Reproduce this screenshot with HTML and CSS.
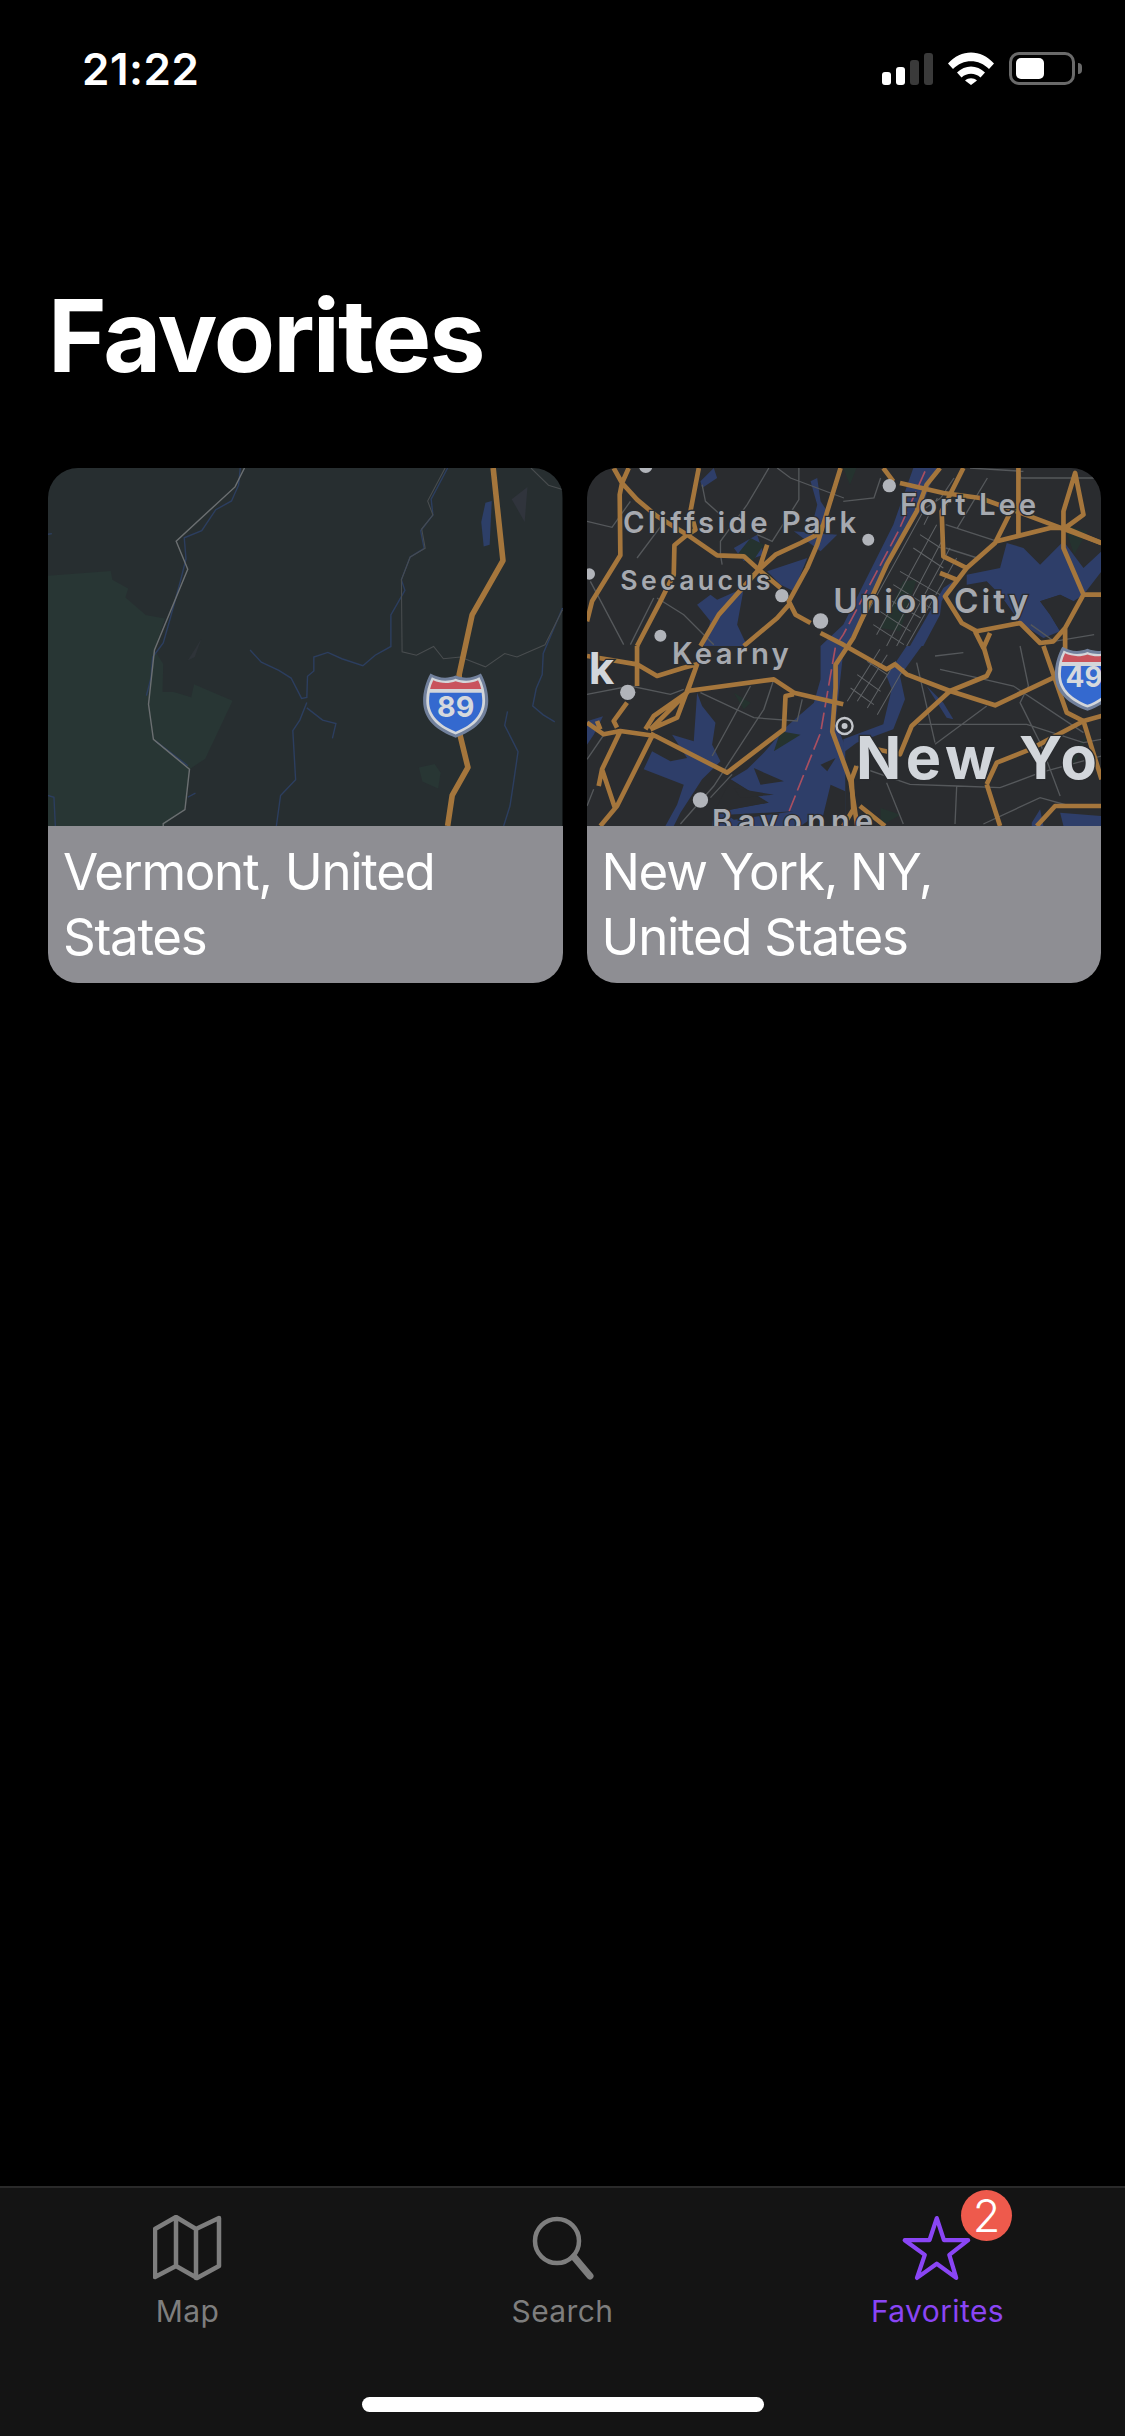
FILE: index.html
```html
<!DOCTYPE html>
<html lang="en">
<head>
  <meta charset="UTF-8">
  <meta name="viewport" content="width=device-width, initial-scale=1.0">
  <title>Favorites</title>
  <link rel="stylesheet" href="styles.css">
</head>
<body>
  <div class="status-bar">
    <span class="time">21:22</span>
    <div class="status-icons">
      <div class="signal">
        <span class="bar bar-1"></span>
        <span class="bar bar-2"></span>
        <span class="bar bar-3 off"></span>
        <span class="bar bar-4 off"></span>
      </div>
      <svg class="wifi" width="46" height="33" viewBox="0 0 46 33">
        <path d="M0 11.5C13 -3.2 33 -3.2 46 11.5L41 17C31 6.5 15 6.5 5 17Z" fill="#fff"/>
        <path d="M9 20.5C17 12.5 29 12.5 37 20.5L32.5 25.5C27 20.5 19 20.5 13.5 25.5Z" fill="#fff"/>
        <path d="M17 28.5C20.5 25.5 25.5 25.5 29 28.5L23 33Z" fill="#fff"/>
      </svg>
      <div class="battery"><span class="battery-level"></span></div>
      <span class="battery-nub"></span>
    </div>
  </div>

  <h1 class="title">Favorites</h1>

  <div class="cards">
    <div class="card">
      <svg class="map map-vermont" viewBox="51 51 1469 1021" preserveAspectRatio="none">
        <defs>
          <g id="shield">
            <path d="M1215 643C1240 653 1265 650 1287 637C1301 662 1308 690 1308 715C1308 770 1266 802 1215 820C1164 802 1122 770 1122 715C1122 690 1129 662 1143 637C1165 650 1190 653 1215 643Z" fill="#71809c"/>
            <path d="M1215 652C1238 661 1262 659 1283 648C1294 670 1299 692 1299 715C1299 765 1260 794 1215 811C1170 794 1131 765 1131 715C1131 692 1136 670 1147 648C1168 659 1192 661 1215 652Z" fill="#d3d6da"/>
            <path d="M1215 692H1289C1290 700 1291 708 1291 715C1291 760 1256 787 1215 803C1174 787 1139 760 1139 715C1139 708 1140 700 1141 692Z" fill="#3469cf"/>
            <path d="M1215 659C1236 667 1260 665 1279 656C1283 664 1286 672 1288 681H1142C1144 672 1147 664 1151 656C1170 665 1194 667 1215 659Z" fill="#c9535c"/>
          </g>
        </defs>
        <rect x="51" y="51" width="1469" height="1021" fill="#272e30"/>
        <path class="vt-park" d="M51 358L230 345L235 370L280 395L272 420L330 470L385 480L355 570L380 610L378 690L410 690L460 705L468 668L578 715L500 880L455 910L440 1025L380 1072H51Z"/>
        <path class="vt-park" d="M1110 905L1155 895L1172 920L1165 965L1120 945Z"/>
        <path d="M1375 140L1420 105L1412 205Z" fill="#30343c"/>
        <path d="M450 600L488 540L470 590Z" fill="#2e3338"/>
        <path d="M1300 150L1318 145L1312 270L1295 275L1288 205Z" fill="#2d3f68"/>
        <path class="vt-stream" d="M600 51L595 100L575 145L530 170L490 230L440 250L445 310L430 370L400 480L380 550L350 590L345 650L332 700"/>
        <path class="vt-stream" d="M358 830L450 900M450 990L472 978M51 240L62 238M51 985L68 990L72 1072"/>
        <path class="vt-stream" d="M1192 51L1145 140L1150 185L1115 230L1125 280L1085 305L1060 370L1070 400L1030 470L1030 560L985 585L950 615L890 595L850 577L810 590L810 630L792 645L790 705L775 708L745 650L710 628L660 605L628 570"/>
        <path class="vt-stream" d="M790 720L770 770L750 800L758 940L715 985L703 1072M790 735L835 770L873 780L863 822"/>
        <path class="vt-stream" d="M1520 450L1465 580L1462 640L1445 680L1435 730L1465 755L1498 775M1363 745L1355 785L1393 860L1380 950L1370 1015L1352 1072"/>
        <path class="vt-border" d="M612 51L585 105L525 160L417 260L450 340L355 570L338 725L352 825L455 910L442 1025L380 1065V1072"/>
        <path class="vt-border thin" d="M1185 51L1135 145L1150 185L1118 225L1128 280L1085 305L1060 370L1062 575L1103 585L1152 560L1180 595L1228 590L1300 618L1355 580L1390 590L1470 555L1520 455M1430 51L1480 100L1520 112"/>
        <path class="road vt-road" d="M1322 51L1350 315L1262 470L1225 640L1228 815L1250 905L1205 985L1192 1072"/>
        <use href="#shield"/>
        <text class="shield-num" x="1215" y="762" font-size="82" text-anchor="middle">89</text>
      </svg>
      <div class="card-label">Vermont, United States</div>
    </div>

    <div class="card">
      <svg class="map map-ny" viewBox="0 0 1542 1074" preserveAspectRatio="none">
        <rect width="1542" height="1074" fill="#2a2c2f"/>
        <!-- water -->
        <path class="water" d="M978 0H1048L998 130L898 290L808 480L788 534H770L745 764L774 834V1074H375L380 1034L545 1004L430 934L480 904L530 854L600 774L680 704L700 634V534L768 470L828 350L918 170Z"/>
        <path class="water" d="M330 674L345 714L385 764L375 830L400 880L345 934L280 1034L260 1074H235L270 1010L290 950L170 904L195 850L250 880L300 870L255 800L320 820Z"/>
        <path class="water" d="M330 410L370 380L390 395L470 360L450 470L480 534L350 534L370 460Z"/>
        <path class="water" d="M440 240L510 200L530 260L470 280ZM620 190L750 200L700 250L660 220ZM540 310L660 270L620 370L580 350Z"/>
        <path class="water" d="M690 30L700 100L720 130L690 200L670 190L690 110L670 40ZM340 40L380 0L390 30L345 60Z"/>
        <path class="water" d="M1138 320L1238 300L1258 225L1308 240L1358 290L1408 240L1428 220L1488 300L1542 250V310L1488 380L1458 400L1418 380L1358 400L1388 440L1418 490L1368 510L1298 465L1238 380L1198 340L1138 350Z"/>
        <path class="water" d="M1098 340L1063 400L1058 440L1008 534H968L1028 430L1068 360ZM958 534H1003L938 624L953 694L918 784L808 824L768 854V814L888 769L913 664L898 624Z"/>
        <path class="water" d="M1018 654L1068 704L1098 754L1078 749Z"/>
        <path class="water" d="M1418 1034L1542 1044V1074H1428ZM1333 1064L1358 1024L1368 1074H1333Z"/>
        <path class="water" d="M0 760L48 745L20 800L0 830Z"/>
        <!-- land patches -->
        <path class="land" d="M60 800L190 800L90 1000L50 900Z"/>
        <path class="land" d="M430 934L540 1004L380 1034ZM700 890L745 870L720 910ZM730 950L774 970V1074H700Z"/>
        <path class="land" d="M440 960L560 980L460 990ZM500 900L590 940L520 950ZM420 1040L620 1030L440 1055ZM640 1074L690 1040L720 1074Z"/>
        <path class="land" d="M1358 400L1418 380L1458 400L1418 490L1388 440ZM1238 380L1298 465L1200 420Z"/>
        <path class="park" d="M490 210L530 230L490 290L450 260ZM948 340L988 335L938 490L878 480ZM768 0H808L788 50Z"/>
        <path class="park" d="M440 674L490 704L470 724ZM580 790L640 800L560 850ZM880 1020L940 1040L880 1074Z"/>
        <path class="park" d="M1430 170L1500 190L1460 260ZM1430 880L1500 800L1460 890Z"/>
        <!-- minor roads -->
        <path class="minor" d="M0 160L75 178L130 100M345 50L355 100L400 140M545 0L480 110L400 220V260L405 290M570 0L610 30L770 90M635 0V95L555 220L510 200M150 270L225 170M10 340L110 530M200 390L130 530M210 390L290 440L380 530"/>
        <path class="minor" d="M340 674L500 749L630 759L645 694M560 634L530 724L380 954L280 1068M490 654L375 864M435 919L370 989M0 679L130 654L250 679L290 664M48 804L0 874M20 964L0 1014"/>
        <path class="minor" d="M993 769H1318L1488 824L1542 814M1298 534L1323 654L1298 704L1358 824L1418 984M1058 604L1168 629L1278 654L1488 794M1043 564L1128 554M988 584L1043 824M1043 829L1198 714M808 894L968 949L1108 954L1238 959L1358 914L1542 864M898 944L948 1068M1108 954L1103 1068M1188 1068L1358 989L1448 1014"/>
        <path class="minor" d="M1148 0L1308 10M1295 0L1300 30H1542M1075 170L1230 220M1075 240L1170 270M1200 30L1110 180M1330 470L1400 520L1520 500M1100 30L1060 90L1000 130M768 100L860 90L880 30"/>
        <!-- manhattan grid -->
        <path class="grid" d="M868 500L1048 170M898 534L1068 210M928 534L1088 240M958 534L1108 270M780 700L878 544M810 700L900 560M840 720L925 580M870 740L950 600M820 470L1008 130M1050 90L1010 170"/>
        <path class="grid" d="M938 310L1058 380M918 350L1030 420M898 390L1000 450M878 430L970 490M978 240L1068 300M998 200L1060 240M858 470L950 530M840 580L900 620M810 620L880 670M790 660L860 710"/>
        <!-- tunnel -->
        <path class="rail" d="M1013 10L933 190L768 500L745 534L700 794L600 1044"/>
        <!-- highways -->
        <path class="road" d="M80 0L105 45L150 95L210 145L300 200L390 262L470 265L515 305L580 360M125 0L105 45L98 80L100 262L15 400L0 460M335 0L310 130L325 185L300 200L262 232L260 320L220 400L150 534M540 230L515 305L565 260L640 225L690 200L700 170"/>
        <path class="road" d="M760 0L720 130L690 230L660 300L605 400L625 440L670 465M515 305L395 440L340 534M605 410L570 450L470 534M700 495L768 530L898 604L923 589L958 619L1088 669L1223 712L1398 629"/>
        <path class="road" d="M888 0L918 40M938 45L1068 75L1178 90L1288 130L1408 175L1542 225M1058 0L1018 50L988 130L898 290L798 510L745 590V660L735 790L790 940L810 1074"/>
        <path class="road" d="M1128 0L1063 130L1068 265L1138 300M1268 135L1223 225L1138 300L1073 385L1123 465L1168 490L1298 465L1358 525L1398 520L1433 480L1488 380L1428 240V130L1463 15L1488 140L1433 180M1293 0V210M1228 220L1388 180H1433L1542 225M1488 380H1542M1163 490L1188 540L1208 495M1433 480V560M1058 315L1108 335"/>
        <path class="road" d="M0 564L150 589L210 624L290 599L330 589L300 674L190 784M150 534V654M330 589L270 749L190 784M300 674L200 744L175 784M300 669L560 634L620 674L768 709"/>
        <path class="road" d="M620 679L595 684L590 784L420 914L205 804L100 789L50 799L0 764M200 794L90 1014L40 1074M100 789L45 904L35 954M45 904L85 1024M120 704L80 759L90 779M30 759L40 784"/>
        <path class="road" d="M1088 669L1198 624L1208 604L1188 534M1088 669L973 774L938 859L868 844M1198 949L1228 884L1328 844L1488 759L1542 744M1198 949L1238 1074M1368 534L1438 734L1488 759L1542 934M1348 1074L1403 1014H1542M818 1014L893 1074M808 894L793 934L798 1024L768 1074"/>
        <!-- place dots -->
        <g class="dot">
          <circle cx="176" cy="-5" r="20"/>
          <circle cx="584" cy="383" r="20"/>
          <circle cx="700" cy="459" r="23"/>
          <circle cx="220" cy="503" r="18"/>
          <circle cx="7" cy="318" r="17"/>
          <circle cx="906" cy="53" r="20"/>
          <circle cx="843" cy="215" r="18"/>
          <circle cx="122" cy="673" r="23"/>
          <circle cx="340" cy="996" r="23"/>
        </g>
        <circle class="capital-ring" cx="772" cy="774" r="24"/>
        <circle class="capital-dot" cx="772" cy="774" r="9"/>
        <use href="#shield" transform="translate(1500 534) scale(1.05) translate(-1215 -635)"/>
        <text class="shield-num" x="1490" y="657" font-size="84" text-anchor="middle">49</text>
        <!-- labels -->
        <text class="place" x="108" y="195" font-size="88" textLength="699">Cliffside Park</text>
        <text class="place" x="100" y="365" font-size="80" textLength="450">Secaucus</text>
        <text class="place" x="738" y="435" font-size="100" textLength="585">Union City</text>
        <text class="place" x="938" y="140" font-size="88" textLength="408">Fort Lee</text>
        <text class="place" x="255" y="589" font-size="88" textLength="350">Kearny</text>
        <text class="place" x="375" y="1092" font-size="92" textLength="483">Bayonne</text>
        <text class="city" x="5" y="649" font-size="132">k</text>
        <text class="city" x="806" y="934" font-size="178" letter-spacing="14">New York</text>
      </svg>
      <div class="card-label">New York, NY, United States</div>
    </div>
  </div>

  <div class="tabbar">
    <div class="tabs">
      <div class="tab">
        <svg class="tab-icon" width="70" height="66" viewBox="0 0 70 66">
          <path d="M2 14V62L23 51L44 63L66 51V3L43 14L23 2Z M23 2V51 M43 14V63"/>
        </svg>
        <span class="tab-label">Map</span>
      </div>
      <div class="tab">
        <svg class="tab-icon" width="64" height="66" viewBox="0 0 64 66">
          <circle cx="26" cy="26" r="22"/>
          <path class="handle" d="M43 42L59 61"/>
        </svg>
        <span class="tab-label">Search</span>
      </div>
      <div class="tab active">
        <svg class="tab-icon" width="74" height="66" viewBox="0 0 74 70">
          <path d="M35.7 3.3L43.3 26.7H69L49 42.3L56.3 66.7L35.7 51.7L14.7 66.7L23 42.3L1.7 26.7H28Z"/>
        </svg>
        <span class="tab-label">Favorites</span>
        <span class="badge">2</span>
      </div>
    </div>
    <div class="home-indicator"></div>
  </div>
</body>
</html>
```

FILE: styles.css
```css
* {
  box-sizing: border-box;
}
body {
  margin: 0;
  width: 1125px;
  height: 2436px;
  background-color: #000;
  color: #fff;
  font-family: Inter, "Liberation Sans", sans-serif;
  display: flex;
  flex-direction: column;
  overflow: hidden;
}

.status-bar {
  display: flex;
  justify-content: space-between;
  align-items: flex-start;
  height: 276px;
  padding: 43px 43px 0 82px;
}
.time {
  font-size: 44px;
  font-weight: 600;
  line-height: 52px;
  letter-spacing: 0.5px;
}
.status-icons {
  display: flex;
  align-items: center;
  margin-top: 9px;
}
.signal {
  display: flex;
  align-items: flex-end;
  gap: 5px;
  height: 33px;
  margin-right: 15px;
}
.bar {
  width: 9px;
  background-color: #fff;
  border-radius: 3px;
}
.bar.off {
  background-color: #3a3a3a;
}
.bar-1 { height: 13px; }
.bar-2 { height: 18px; }
.bar-3 { height: 25px; }
.bar-4 { height: 32px; }
.wifi {
  margin-right: 15px;
}
.battery {
  width: 66px;
  height: 33px;
  border: 3px solid #6a6a6a;
  border-radius: 10px;
  padding: 3px 4px;
}
.battery-level {
  display: block;
  width: 28px;
  height: 21px;
  background-color: #fff;
  border-radius: 5px;
}
.battery-nub {
  width: 4px;
  height: 11px;
  margin-left: 3px;
  background-color: #6a6a6a;
  border-radius: 0 4px 4px 0;
}

.title {
  margin: 0 0 0 48px;
  font-size: 100px;
  font-weight: 700;
  line-height: 120px;
  letter-spacing: -1.9px;
}

.cards {
  display: grid;
  grid-template-columns: 1fr 1fr;
  gap: 24px;
  padding: 0 24px 0 48px;
  margin-top: 72px;
}
.card {
  border-radius: 30px;
  overflow: hidden;
}
.map {
  display: block;
  width: 100%;
  height: 358px;
}
.card-label {
  height: 157px;
  padding: 13px 16px 0 15px;
  background-color: #8e8e93;
  font-size: 51px;
  line-height: 65px;
  letter-spacing: -1.3px;
}

.road {
  fill: none;
  stroke: #a5763c;
  stroke-width: 14;
  stroke-linejoin: round;
}
.vt-road {
  stroke-width: 16;
}
.vt-park {
  fill: #283634;
}
.vt-stream {
  fill: none;
  stroke: #2c3e5f;
  stroke-width: 4;
}
.vt-border {
  fill: none;
  stroke: #6b6f71;
  stroke-width: 4;
}
.vt-border.thin {
  stroke: #494d4f;
  stroke-width: 3;
}
.shield-num {
  fill: #d6d9dd;
  font-family: Inter, sans-serif;
  font-weight: 700;
}
.water {
  fill: #2e3e69;
}
.land {
  fill: #2a2c2f;
}
.park {
  fill: #25332f;
}
.minor {
  fill: none;
  stroke: #55585b;
  stroke-width: 4;
}
.grid {
  fill: none;
  stroke: #5f6265;
  stroke-width: 3;
}
.rail {
  fill: none;
  stroke: #a94f60;
  stroke-width: 5;
  stroke-dasharray: 50 16;
}
.dot {
  fill: #b1b4ba;
}
.capital-ring {
  fill: #2a2c2f;
  stroke: #c3c6cb;
  stroke-width: 7;
}
.capital-dot {
  fill: #c3c6cb;
}
.place,
.city {
  paint-order: stroke;
  stroke: #2a2c2f;
  stroke-width: 8;
  font-family: Inter, sans-serif;
}
.place {
  fill: #a6a9af;
  font-weight: 600;
}
.city {
  fill: #d2d6db;
  font-weight: 700;
}

.tabbar {
  margin-top: auto;
  height: 250px;
  display: flex;
  flex-direction: column;
  background-color: #141414;
  border-top: 2px solid #2a2a2a;
}
.tabs {
  display: grid;
  grid-template-columns: repeat(3, 1fr);
  padding-top: 27px;
}
.tab {
  position: relative;
  display: flex;
  flex-direction: column;
  align-items: center;
  color: #7e7e7e;
}
.tab-icon {
  fill: none;
  stroke: #7e7e7e;
  stroke-width: 4.5;
  stroke-linejoin: round;
  stroke-linecap: round;
}
.tab-icon .handle {
  stroke-width: 7;
}
.tab.active {
  color: #8a45f5;
}
.tab.active .tab-icon {
  stroke: #8a45f5;
}
.tab-label {
  margin-top: 12px;
  font-size: 30px;
  line-height: 36px;
  letter-spacing: 0.4px;
}
.badge {
  position: absolute;
  top: -25px;
  left: 211px;
  width: 51px;
  height: 51px;
  border-radius: 50%;
  background-color: #ee5a4c;
  color: #fff;
  font-size: 45px;
  font-weight: 300;
  line-height: 51px;
  text-align: center;
}
.home-indicator {
  width: 402px;
  height: 15px;
  margin: auto auto 24px;
  background-color: #fff;
  border-radius: 8px;
}
```
